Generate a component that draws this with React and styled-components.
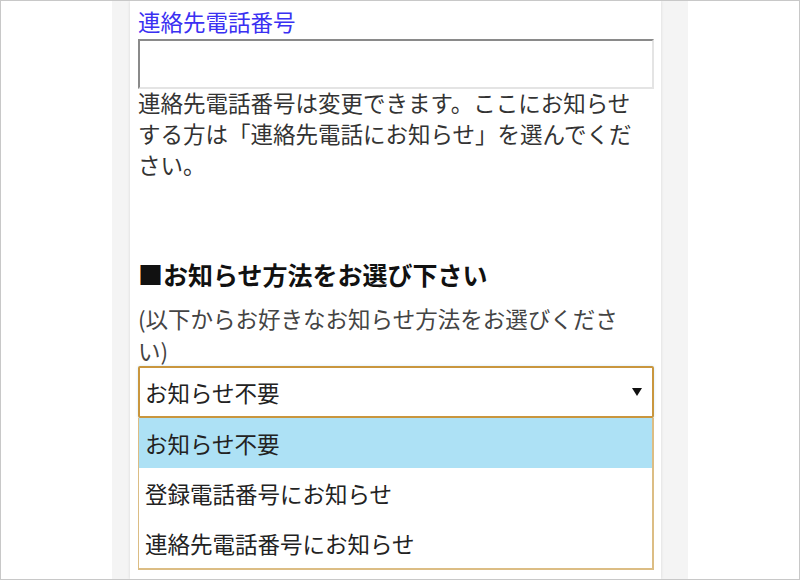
import React from "react";
import styled, { createGlobalStyle } from "styled-components";

const GlobalStyle = createGlobalStyle`
	html, body {
		margin: 0;
		padding: 0;
		background: #ffffff;
	}
	body {
		font-family: "Noto Sans CJK JP", "Noto Sans", sans-serif;
		color: #333333;
	}
`;

const options = ["お知らせ不要", "登録電話番号にお知らせ", "連絡先電話番号にお知らせ"];

const App = () => {
	return (
		<>
			<GlobalStyle />
			<Frame>
				<Page>
					<Content>
						<Label>連絡先電話番号</Label>
						<TextInput type="text" />
						<Note>
							連絡先電話番号は変更できます。ここにお知らせする方は「連絡先電話にお知らせ」を選んでください。
						</Note>
						<Heading>■お知らせ方法をお選び下さい</Heading>
						<SubNote>(以下からお好きなお知らせ方法をお選びください)</SubNote>
						<SelectBox>
							<span>{options[0]}</span>
							<Arrow />
						</SelectBox>
						<OptionList>
							{options.map((opt, i) => (
								<Option key={opt} selected={i === 0}>
									{opt}
								</Option>
							))}
						</OptionList>
					</Content>
				</Page>
			</Frame>
		</>
	);
};

export default App;

const Frame = styled.div`
	width: 800px;
	height: 580px;
	box-sizing: border-box;
	border: 1px solid #c8c8c8;
	background: #ffffff;
	overflow: hidden;
`;

const Page = styled.div`
	width: 576px;
	height: 100%;
	margin: 0 auto;
	box-sizing: border-box;
	padding: 0 27px 0 18px;
	background: #f4f4f4;
`;

const Content = styled.div`
	height: 100%;
	box-sizing: border-box;
	padding: 4px 7px 0 8px;
	background: #ffffff;
	box-shadow: 0 0 3px rgba(0, 0, 0, 0.12);
	font-size: 22.5px;
`;

const Label = styled.div`
	color: #3a30f2;
	line-height: 32px;
	margin-bottom: 2px;
`;

const TextInput = styled.input`
	display: block;
	width: 100%;
	height: 50px;
	box-sizing: border-box;
	margin: 0;
	border: 2px solid #e4e4e4;
	border-top-color: #8a8a8a;
	border-left-color: #8a8a8a;
	background: #ffffff;
	outline: none;
`;

const Note = styled.p`
	margin: -2px 0 0 0;
	padding-right: 12px;
	line-height: 31px;
	color: #333333;
`;

const Heading = styled.h2`
	margin: 76px 0 0 0;
	font-size: 25px;
	font-weight: 700;
	line-height: 36px;
	color: #111111;
`;

const SubNote = styled(Note)`
	margin-top: 10px;
	line-height: 32px;
	color: #444444;
`;

const SelectBox = styled.div`
	display: flex;
	align-items: center;
	justify-content: space-between;
	height: 52px;
	box-sizing: border-box;
	margin-top: 0;
	padding: 0 10px 0 5px;
	border: 2px solid #c9963e;
	border-radius: 2px;
	background: #ffffff;
	box-shadow: 0 0 3px rgba(120, 190, 230, 0.35);
	color: #222222;
`;

const Arrow = styled.span`
	width: 0;
	height: 0;
	border-left: 5px solid transparent;
	border-right: 5px solid transparent;
	border-top: 8px solid #111111;
`;

const OptionList = styled.ul`
	list-style: none;
	margin: 0;
	padding: 0;
	border: 2px solid #dcbd84;
	border-top: none;
	border-left-width: 1px;
	background: #ffffff;
`;

const Option = styled.li`
	height: 50px;
	line-height: 50px;
	padding-left: 6px;
	color: #222222;
	background: ${(p) => (p.selected ? "#ade1f5" : "#ffffff")};
`;
